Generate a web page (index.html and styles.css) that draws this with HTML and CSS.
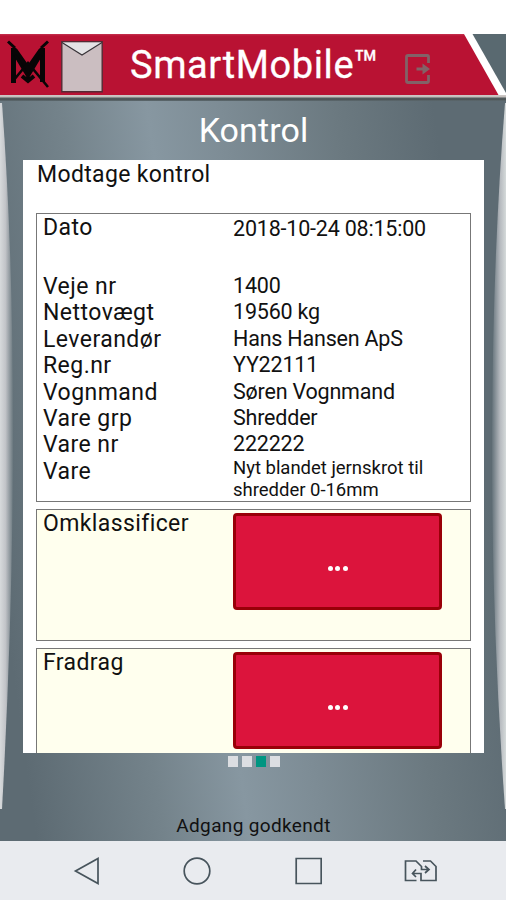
FILE: index.html
```html
<!DOCTYPE html>
<html lang="da">
<head>
<meta charset="utf-8">
<title>SmartMobile</title>
<link rel="stylesheet" href="styles.css">
</head>
<body>
<header class="topbar">
  <svg class="logo" width="42" height="50" viewBox="0 0 42 50" fill="none" stroke="#080506">
    <path d="M6.500 9V44M35.500 9V43" stroke-width="5"/>
    <path d="M1 2.500L8 9M41 2.500L34 9" stroke-width="3"/>
    <path d="M7 11L21 31L35 11" stroke-width="6.500"/>
    <path d="M8 16L23 41M34 16L19 41" stroke-width="3"/>
    <path d="M6 42L21 24L41 48" stroke-width="2.600"/>
    <path d="M15 37L21 42L27 37" stroke-width="4"/>
  </svg>
  <svg class="mail" width="42" height="52" viewBox="0 0 42 52">
    <path d="M.8 .8H41.2V50.8H.8Z" fill="#cbbec1" stroke="#542b34" stroke-width="1.4"/>
    <path d="M1.5 1.5L21 14L40.5 1.5Z" fill="#e4e3e5"/>
    <path d="M1 1.5L21 14L41 1.5" fill="none" stroke="#383338" stroke-width="1.1"/>
  </svg>
  <h1 class="brand">SmartMobile<span class="tm">™</span></h1>
  <svg class="exit" width="26" height="30" viewBox="0 0 26 30">
    <path d="M23.5 9V2.5Q23.5 1.5 22.5 1.5H3Q1.5 1.5 1.5 3V27Q1.5 28.5 3 28.5H22.5Q23.5 28.5 23.5 27.5V21" fill="none" stroke="#826267" stroke-width="2.8"/>
    <path d="M11.5 13.5H17.5V9.5L25 15L17.5 20.5V16.5H11.5Z" fill="#826267"/>
  </svg>
  <svg class="corner" width="42" height="61" viewBox="0 0 42 61">
    <path d="M0 0H42V61H34.500Z" fill="#fff"/>
    <path d="M8.500 0H42V59Z" fill="#596970"/>
  </svg>
</header>
<main class="screen">
  <svg class="edges" width="506" height="740" viewBox="0 0 506 740">
    <defs>
      <linearGradient id="left" gradientUnits="userSpaceOnUse" x1="0" x2="13" y1="0" y2="0">
        <stop offset="0" stop-color="#d7dadc"/><stop offset=".42" stop-color="#c2c4c8"/><stop offset="1" stop-color="#6a787f"/>
      </linearGradient>
      <linearGradient id="right" gradientUnits="userSpaceOnUse" x1="506" x2="492" y1="0" y2="0">
        <stop offset="0" stop-color="#d5dada"/><stop offset=".42" stop-color="#b6babf"/><stop offset="1" stop-color="#64727a"/>
      </linearGradient>
    </defs>
    <path d="M0 2H2Q13 150 13 330T2 708H0Z" fill="url(#left)"/>
    <path d="M506 2H505Q493 150 492 330T505 708H506Z" fill="url(#right)"/>
  </svg>
  <h2 class="title">Kontrol</h2>
  <section class="panel">
    <p class="subtitle">Modtage kontrol</p>
    <dl class="details">
      <div class="row date"><dt>Dato</dt><dd>2018-10-24 08:15:00</dd></div>
      <div class="row"><dt>Veje nr</dt><dd>1400</dd></div>
      <div class="row"><dt>Nettovægt</dt><dd>19560 kg</dd></div>
      <div class="row"><dt>Leverandør</dt><dd>Hans Hansen ApS</dd></div>
      <div class="row"><dt>Reg.nr</dt><dd>YY22111</dd></div>
      <div class="row"><dt>Vognmand</dt><dd>Søren Vognmand</dd></div>
      <div class="row"><dt>Vare grp</dt><dd>Shredder</dd></div>
      <div class="row"><dt>Vare nr</dt><dd>222222</dd></div>
      <div class="row"><dt>Vare</dt><dd class="small">Nyt blandet jernskrot til<br>shredder 0-16mm</dd></div>
    </dl>
    <div class="field"><span>Omklassificer</span><button class="more"><i></i><i></i><i></i></button></div>
    <div class="field"><span>Fradrag</span><button class="more"><i></i><i></i><i></i></button></div>
  </section>
  <div class="pager"><i></i><i></i><i class="on"></i><i></i></div>
  <p class="status">Adgang godkendt</p>
</main>
<nav class="navbar">
  <svg width="28" height="30" viewBox="0 0 28 30"><path d="M2.500 15L25 2.500V27.500Z"/></svg>
  <svg width="30" height="30" viewBox="0 0 30 30"><circle cx="15" cy="15" r="12.800"/></svg>
  <svg width="30" height="30" viewBox="0 0 30 30"><path d="M4.200 2.500H29.200V27.500H4.200Z"/></svg>
  <svg width="36" height="26" viewBox="0 0 36 26"><path d="M13.500 22.500H2.500V3H13L18.500 8.500V11.500H25M20 3H27.500L33 8.500V22.500H18V15.500H9.500M22 8L26 11.500L22 15M13 11.500L9.500 15.500L13 19"/></svg>
</nav>
</body>
</html>
```

FILE: styles.css
```css
* { box-sizing: border-box; }
body {
  margin: 0;
  width: 506px;
  height: 900px;
  padding-top: 34px;
  overflow: hidden;
  background: #fff;
  color: #111;
  font-family: Roboto, sans-serif;
  display: flex;
  flex-direction: column;
}
h1, h2, p, dl, dd { margin: 0; font-weight: 400; }
svg { display: block; flex: none; }
.topbar {
  height: 67px;
  flex: none;
  display: flex;
  align-items: flex-start;
  padding-left: 7px;
  background: linear-gradient(#c53450 0, #b91233 2px, #b91233 61px, #d0c9c7 61px, #c1bebb 63px, #535b5d 64px, #4c5456 66px, #65747b 67px);
}
.logo { margin-top: 5px; }
.mail { margin: 7px 0 0 12px; }
.brand {
  display: flex;
  width: 247px;
  margin-left: 27px;
  padding-top: 8px;
  font-size: 38px;
  line-height: 46px;
  letter-spacing: .6px;
  color: #fff;
  white-space: nowrap;
  -webkit-text-stroke: .3px #fff;
}
.tm { margin-left: -1px; font-size: 41px; line-height: 46px; }
.exit { margin: 20px 0 0 28px; }
.corner { margin-left: auto; }
.screen {
  position: relative;
  height: 740px;
  flex: none;
  padding: 0 22px 0 23px;
  background: linear-gradient(82deg, #5d6b73 6%, #74838b 27%, #8797a1 41%, #7d8c95 53%, #6b7980 72%, #5d6b73 88%);
}
.edges { position: absolute; inset: 0; }
.title {
  height: 59px;
  padding-top: 9px;
  font-size: 34px;
  line-height: 41px;
  letter-spacing: .1px;
  color: #fff;
  text-align: center;
}
.panel {
  position: relative;
  height: 593px;
  padding: 1px 13px 0;
  overflow: hidden;
  background: #fff;
}
.subtitle {
  height: 52px;
  font-size: 23px;
  line-height: 27px;
  letter-spacing: .35px;
  padding-left: 1px;
}
.details {
  height: 289px;
  padding: 1px 6px 0;
  border: 1px solid #777;
}
.row {
  height: 26.4px;
  display: grid;
  grid-template-columns: 190px 1fr;
  font-size: 23px;
  line-height: 29px;
  letter-spacing: .45px;
}
.date { height: 57px; line-height: 26px; }
.row dd { font-size: 21.5px; line-height: 27px; letter-spacing: -.2px; }
.row .small { font-size: 18.5px; line-height: 22px; letter-spacing: -.02px; }
.field {
  height: 132px;
  margin-top: 7px;
  padding: 3px 6px;
  display: grid;
  grid-template-columns: 190px 209px;
  align-items: start;
  border: 1px solid #777;
  background: #ffffee;
  font-size: 23px;
  line-height: 22px;
  letter-spacing: .4px;
}
.more {
  height: 97px;
  padding: 13px 0 0;
  display: flex;
  align-items: center;
  justify-content: center;
  gap: 2.500px;
  border: 3px solid #990008;
  border-radius: 4px;
  background: #dc143c;
}
.more i { width: 5px; height: 5px; border-radius: 50%; background: #fff; }
.pager {
  position: relative;
  height: 17px;
  display: flex;
  justify-content: center;
  gap: 4px;
  padding-top: 3px;
}
.pager i { width: 10px; height: 11px; background: #dcdee2; }
.pager .on { background: #009581; }
.status {
  position: relative;
  padding-top: 44px;
  font-size: 19px;
  line-height: 23px;
  letter-spacing: .35px;
  text-align: center;
}
.navbar {
  height: 59px;
  flex: none;
  display: flex;
  align-items: center;
  justify-content: space-between;
  padding: 1px 67px 0 73px;
  background: #e9ebef;
}
.navbar svg { fill: none; stroke: #47545c; stroke-width: 1.700; }
```
